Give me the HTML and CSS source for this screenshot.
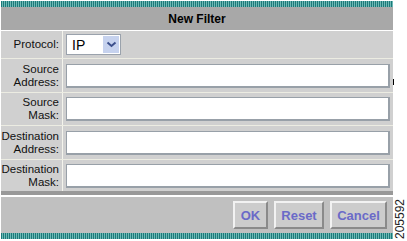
FILE: index.html
```html
<!DOCTYPE html>
<html>
<head>
<meta charset="utf-8">
<link rel="stylesheet" href="styles.css">
</head>
<body>
<div class="page">
  <div class="panel">
    <div class="stripe"></div>
    <div class="header">New Filter</div>
    <div class="row r-proto">
      <div class="label">Protocol:</div>
      <div class="field">
        <div class="select"><span class="sel-text">IP</span><span class="sel-btn"><svg width="11" height="7" viewBox="0 0 11 7"><path d="M1.5 1.5 L5.5 5 L9.5 1.5" fill="none" stroke="#3b4f8c" stroke-width="2"/></svg></span></div>
      </div>
    </div>
    <div class="row r-a">
      <div class="label">Source<br>Address:</div>
      <div class="field"><div class="input"></div></div>
    </div>
    <div class="row r-b">
      <div class="label">Source<br>Mask:</div>
      <div class="field"><div class="input"></div></div>
    </div>
    <div class="row r-a">
      <div class="label">Destination<br>Address:</div>
      <div class="field"><div class="input"></div></div>
    </div>
    <div class="row r-c">
      <div class="label">Destination<br>Mask:</div>
      <div class="field"><div class="input"></div></div>
    </div>
    <div class="darkbar"></div>
    <div class="buttons">
      <div class="btn b-ok">OK</div>
      <div class="btn b-reset">Reset</div>
      <div class="btn b-cancel">Cancel</div>
    </div>
    <div class="stripe"></div>
  </div>
  <div class="cursor"></div>
  <div class="fignum">205592</div>
</div>
</body>
</html>
```
FILE: styles.css
```css
html, body {
  margin: 0;
  padding: 0;
  background: #ffffff;
}
.page {
  position: relative;
  width: 407px;
  height: 241px;
  font-family: "Liberation Sans", Arial, sans-serif;
}
.panel {
  width: 392px;
  margin-left: 1px;
  padding-top: 1px;
  display: flex;
  flex-direction: column;
}
.stripe {
  height: 6px;
  background: repeating-linear-gradient(90deg, #1c7a7a 0 1px, #6fb9b6 1px 2px);
}
.header {
  height: 23px;
  background: #a8a8a8;
  border-bottom: 1px solid #ffffff;
  display: flex;
  align-items: center;
  justify-content: center;
  font-weight: bold;
  font-size: 12px;
  color: #000;
}
.row {
  display: grid;
  grid-template-columns: 61px 1fr;
  column-gap: 1px;
  background: #f4f4ec;
  border-bottom: 1px solid #ecece2;
}
.r-proto { height: 27px; }
.r-a { height: 33px; }
.r-b { height: 32px; }
.r-c { height: 31px; border-bottom: none; }
.label {
  background: #d0d0d0;
  display: flex;
  flex-direction: column;
  justify-content: center;
  align-items: flex-end;
  text-align: right;
  padding-right: 3px;
  font-size: 11.5px;
  line-height: 13px;
  color: #111;
}
.field {
  background: #d0d0d0;
  display: flex;
  align-items: center;
  padding-left: 3px;
}
.select {
  width: 53px;
  height: 19px;
  background: #fff;
  border: 1px solid #9aa2ac;
  display: flex;
  align-items: center;
  justify-content: space-between;
}
.sel-text {
  font-size: 14px;
  padding-left: 5px;
  color: #000;
}
.sel-btn {
  width: 16px;
  height: 17px;
  margin-right: 1px;
  background: #c6d2ee;
  display: flex;
  align-items: center;
  justify-content: center;
}
.input {
  width: 321px;
  height: 21px;
  background: #fff;
  border: 1px solid #98a0a8;
  border-right-width: 2px;
  border-bottom-width: 2px;
}
.darkbar {
  height: 4px;
  background: #999999;
  border-bottom: 2px solid #ffffff;
}
.buttons {
  height: 36px;
  background: #c0c0c0;
  display: flex;
  align-items: center;
  justify-content: flex-end;
  gap: 6px;
  padding-right: 6px;
}
.btn {
  height: 24px;
  display: flex;
  align-items: center;
  justify-content: center;
  background: #cccccc;
  border: 2px solid;
  border-color: #f2f2f2 #8a8a8a #8a8a8a #f2f2f2;
  font-weight: bold;
  font-size: 13px;
  color: #6a6ac8;
}
.b-ok { width: 31px; }
.b-reset { width: 46px; }
.b-cancel { width: 53px; }
.cursor {
  position: absolute;
  left: 393px;
  top: 79px;
  width: 1px;
  height: 6px;
  background: #000;
}
.fignum {
  position: absolute;
  left: 394px;
  top: 239px;
  transform: rotate(-90deg);
  transform-origin: 0 0;
  font-size: 12px;
  line-height: 12px;
  color: #222;
}
```
